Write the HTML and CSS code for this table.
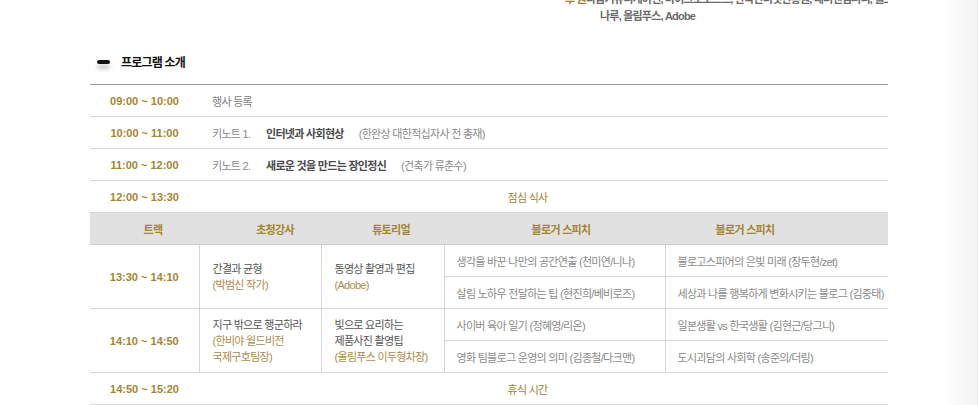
FILE: index.html
```html
<!DOCTYPE html>
<html lang="ko">
<head>
    <meta charset="UTF-8">
    <title>프로그램 소개</title>
    <link rel="stylesheet" href="styles.css">
</head>
<body>
    <div class="page">
        <div class="content">
            <div class="sponsor">
                <div class="sponsor-row">
                    <span class="sponsor-label">후 원</span>
                    <span class="sponsor-text">다음커뮤니케이션, 마이크로소프트, 한국인터넷진흥원, 태터앤컴퍼니, 월드비전,</span>
                </div>
                <div class="sponsor-row">
                    <span class="sponsor-label"></span>
                    <span class="sponsor-text">나루, 올림푸스, Adobe</span>
                </div>
            </div>

            <h2 class="section-title"><span class="dash"></span>프로그램 소개</h2>

            <table class="program">
                <colgroup>
                    <col class="c-time">
                    <col class="c-guest">
                    <col class="c-tutorial">
                    <col class="c-blog1">
                    <col class="c-blog2">
                </colgroup>
                <tr>
                    <td class="time">09:00 ~ 10:00</td>
                    <td colspan="4" class="plain">행사 등록</td>
                </tr>
                <tr>
                    <td class="time">10:00 ~ 11:00</td>
                    <td colspan="4" class="plain">
                        <span class="kn">키노트 1.</span><span class="kn-title">인터넷과 사회현상</span><span class="kn-who">(한완상 대한적십자사 전 총재)</span>
                    </td>
                </tr>
                <tr>
                    <td class="time">11:00 ~ 12:00</td>
                    <td colspan="4" class="plain">
                        <span class="kn">키노트 2.</span><span class="kn-title">새로운 것을 만드는 장인정신</span><span class="kn-who">(건축가 류춘수)</span>
                    </td>
                </tr>
                <tr>
                    <td class="time">12:00 ~ 13:30</td>
                    <td colspan="4" class="break">점심 식사</td>
                </tr>
                <tr class="head">
                    <th class="h1">트랙</th>
                    <th class="h2">초청강사</th>
                    <th class="h3">튜토리얼</th>
                    <th class="h4">블로거 스피치</th>
                    <th class="h5">블로거 스피치</th>
                </tr>
                <tr class="track">
                    <td class="time" rowspan="2">13:30 ~ 14:10</td>
                    <td class="talk" rowspan="2">간결과 균형<br><span class="who">(박범신 작가)</span></td>
                    <td class="talk" rowspan="2">동영상 촬영과 편집<br><span class="who">(Adobe)</span></td>
                    <td class="blog">생각을 바꾼 나만의 공간연출 (천미연/니나)</td>
                    <td class="blog">블로고스피어의 은빛 미래 (장두현/zet)</td>
                </tr>
                <tr class="track">
                    <td class="blog">살림 노하우 전달하는 팁 (현진희/베비로즈)</td>
                    <td class="blog">세상과 나를 행복하게 변화시키는 블로그 (김중태)</td>
                </tr>
                <tr class="track">
                    <td class="time" rowspan="2">14:10 ~ 14:50</td>
                    <td class="talk" rowspan="2">지구 밖으로 행군하라<br><span class="who">(한비야 월드비전<br>국제구호팀장)</span></td>
                    <td class="talk" rowspan="2">빛으로 요리하는<br>제품사진 촬영팁<br><span class="who">(올림푸스 이두형차장)</span></td>
                    <td class="blog">사이버 육아 일기 (정혜영/리온)</td>
                    <td class="blog">일본생활 vs 한국생활 (김현근/당그니)</td>
                </tr>
                <tr class="track">
                    <td class="blog">영화 팀블로그 운영의 의미 (김종철/다크맨)</td>
                    <td class="blog">도시괴담의 사회학 (송준의/더링)</td>
                </tr>
                <tr>
                    <td class="time">14:50 ~ 15:20</td>
                    <td colspan="4" class="break">휴식 시간</td>
                </tr>
            </table>
        </div>
        <div class="edge"></div>
    </div>
</body>
</html>
```

FILE: styles.css
```css
body {
    margin: 0;
    padding: 0;
    background-color: #fff;
    font-family: "Liberation Sans", "Noto Sans CJK KR", sans-serif;
    overflow: hidden;
}

.page {
    display: flex;
    height: 405px;
}

.content {
    width: 798px;
    padding-left: 90px;
    flex: none;
}

.edge {
    flex: 1;
    background: linear-gradient(to right, #fff 0%, #fff 62%, #f3f3f3 100%);
    border-right: 1px solid #e4e4e4;
}

/* partly scrolled-off sponsor block */
.sponsor {
    margin-top: -9px;
    padding-left: 475px;
}

.sponsor-row {
    display: flex;
    height: 17px;
    line-height: 17px;
    font-size: 11px;
    letter-spacing: -0.8px;
    white-space: nowrap;
}

.sponsor-label {
    width: 35px;
    color: #a0802e;
    font-weight: bold;
}

.sponsor-text {
    color: #6a6a6a;
    font-weight: bold;
}

.section-title {
    display: flex;
    align-items: center;
    margin: 28px 0 0 0;
    height: 17px;
    font-size: 12px;
    font-weight: bold;
    color: #111;
    letter-spacing: -0.8px;
}

.dash {
    width: 13px;
    height: 4px;
    border-radius: 2px;
    background-color: #111;
    margin: 0 11px 0 7px;
    box-shadow: 0 5px 4px rgba(0, 0, 0, 0.25);
}

.program {
    width: 798px;
    margin-top: 14px;
    border-collapse: collapse;
    table-layout: fixed;
    border-top: 1px solid #9c9c9c;
    font-size: 11px;
    letter-spacing: -0.7px;
}

.c-time { width: 109px; }
.c-guest { width: 122px; }
.c-tutorial { width: 123px; }
.c-blog1 { width: 221px; }
.c-blog2 { width: 223px; }

.program td,
.program th {
    height: 31px;
    padding: 0;
    border-bottom: 1px solid #d6d6d6;
    vertical-align: middle;
    white-space: nowrap;
}

.time {
    text-align: center;
    font-weight: bold;
    color: #a3852f;
    letter-spacing: 0;
}

.plain {
    padding-left: 13px !important;
    color: #808080;
}

.kn {
    display: inline-block;
    width: 54px;
    color: #8a8a8a;
}

.kn-title {
    display: inline-block;
    color: #4a4a4a;
    font-weight: bold;
    margin-right: 15px;
}

.kn-who {
    color: #8a8a8a;
}

.break {
    text-align: center;
    padding-right: 32px !important;
    color: #a3852f;
}

.head th {
    background-color: #e1e1e1;
    border-top: 1px solid #d0d0d0;
    border-bottom: 1px solid #cfcfcf;
    color: #a3852f;
    font-weight: bold;
    text-align: center;
}

.head .h1 { padding-left: 17px; }
.head .h2 { padding-left: 30px; }
.head .h3 { padding-left: 17px; }
.head .h4 { padding-left: 13px; }
.head .h5 { padding-right: 63px; }

.track td {
    border-right: 1px solid #d6d6d6;
}

.track td:last-child {
    border-right: none;
}

.talk {
    padding-left: 13px !important;
    color: #555;
    line-height: 16px;
}

.who {
    color: #ad8a4e;
}

.blog {
    padding-left: 12px !important;
    color: #8a8a8a;
}
```
